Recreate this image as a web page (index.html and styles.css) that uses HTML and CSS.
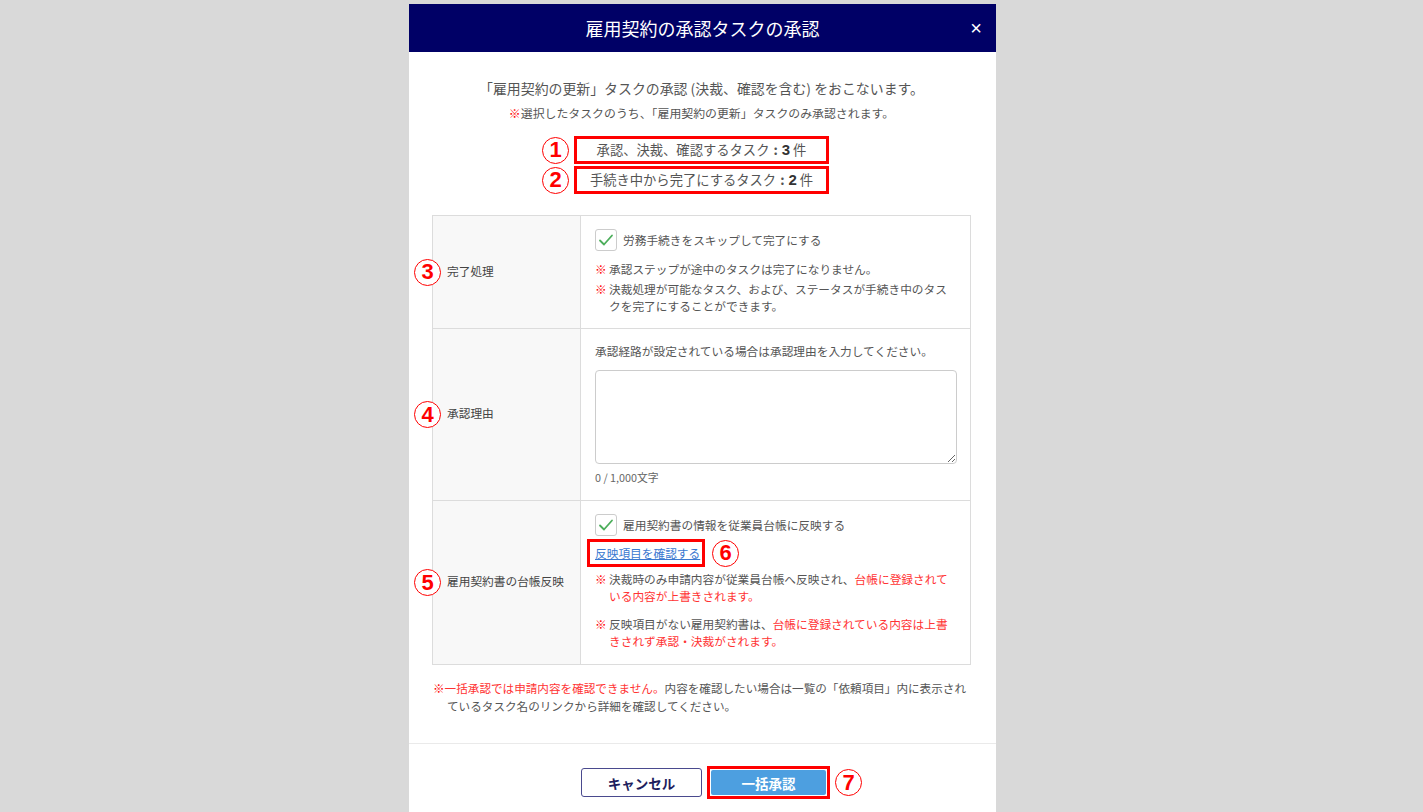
FILE: index.html
```html
<!DOCTYPE html>
<html lang="ja">
<head>
    <meta charset="UTF-8">
    <meta name="viewport" content="width=device-width, initial-scale=1.0">
    <title>雇用契約の承認タスクの承認</title>
    <link rel="stylesheet" href="styles.css">
</head>
<body>
    <div class="modal">
        <div class="modal-header">
            <span></span>
            <h1>雇用契約の承認タスクの承認</h1>
            <span class="close">×</span>
        </div>

        <div class="modal-body">
            <p class="intro">「雇用契約の更新」タスクの承認 (決裁、確認を含む) をおこないます。</p>
            <p class="sub-note"><span class="kome">※</span>選択したタスクのうち、「雇用契約の更新」タスクのみ承認されます。</p>

            <!-- Counts -->
            <div class="counts">
                <div class="count-row">
                    <span class="num">1</span>
                    <div class="count-box">承認、決裁、確認するタスク<span class="colon">:</span><b>3</b> 件</div>
                </div>
                <div class="count-row">
                    <span class="num">2</span>
                    <div class="count-box">手続き中から完了にするタスク<span class="colon">:</span><b>2</b> 件</div>
                </div>
            </div>

            <table class="form-table">
                <!-- Complete -->
                <tr>
                    <th><span class="num">3</span>完了処理</th>
                    <td>
                        <label class="check">
                            <span class="box">
                                <svg width="22" height="22" viewBox="0 0 22 22"><path d="M5 11.5 L9 15.5 L17 6.5" fill="none" stroke="#4cae5b" stroke-width="1.8" stroke-linecap="round" stroke-linejoin="round"/></svg>
                            </span>
                            労務手続きをスキップして完了にする
                        </label>
                        <ul class="notes tight">
                            <li><span class="kome">※</span><span>承認ステップが途中のタスクは完了になりません。</span></li>
                            <li><span class="kome">※</span><span>決裁処理が可能なタスク、および、ステータスが手続き中のタスクを完了にすることができます。</span></li>
                        </ul>
                    </td>
                </tr>

                <!-- Reason -->
                <tr>
                    <th><span class="num">4</span>承認理由</th>
                    <td>
                        <p class="hint">承認経路が設定されている場合は承認理由を入力してください。</p>
                        <textarea class="reason"></textarea>
                        <p class="counter">0 / 1,000文字</p>
                    </td>
                </tr>

                <!-- Ledger -->
                <tr class="last">
                    <th><span class="num">5</span>雇用契約書の台帳反映</th>
                    <td>
                        <label class="check">
                            <span class="box">
                                <svg width="22" height="22" viewBox="0 0 22 22"><path d="M5 11.5 L9 15.5 L17 6.5" fill="none" stroke="#4cae5b" stroke-width="1.8" stroke-linecap="round" stroke-linejoin="round"/></svg>
                            </span>
                            雇用契約書の情報を従業員台帳に反映する
                        </label>
                        <div class="link-row">
                            <span class="link-box"><a href="#">反映項目を確認する</a></span>
                            <span class="num">6</span>
                        </div>
                        <ul class="notes">
                            <li><span class="kome">※</span><span>決裁時のみ申請内容が従業員台帳へ反映され、<span class="red">台帳に登録されている内容が上書きされます。</span></span></li>
                            <li><span class="kome">※</span><span>反映項目がない雇用契約書は、<span class="red">台帳に登録されている内容は上書きされず承認・決裁がされます。</span></span></li>
                        </ul>
                    </td>
                </tr>
            </table>

            <p class="bottom-note"><span class="kome">※</span><span class="red">一括承認では申請内容を確認できません。</span>内容を確認したい場合は一覧の「依頼項目」内に表示されているタスク名のリンクから詳細を確認してください。</p>
        </div>

        <div class="modal-footer">
            <button class="btn btn-cancel">キャンセル</button>
            <span class="btn-mark"><button class="btn btn-primary">一括承認</button></span>
            <span class="num">7</span>
        </div>
    </div>
</body>
</html>
```

FILE: styles.css
```css
body {
    margin: 0;
    padding-right: 18px;
    height: 100vh;
    overflow: hidden;
    background-color: #d9d9d9;
    font-family: "Noto Sans CJK JP", sans-serif;
    color: #555;
}
p {
    margin: 0;
}
.modal {
    width: 587px;
    margin: 4px auto 0;
    background-color: #fff;
    min-height: 808px;
}
.modal-header {
    display: grid;
    grid-template-columns: 40px 1fr 40px;
    align-items: center;
    height: 48px;
    background-color: #000066;
    color: #fff;
}
.modal-header h1 {
    margin: 0;
    font-size: 18px;
    font-weight: normal;
    text-align: center;
}
.close {
    text-align: center;
    font-family: "Liberation Sans", sans-serif;
    font-size: 20px;
}
.modal-body {
    padding: 27px 25px 28px 23px;
}
.intro {
    font-size: 13.9px;
    line-height: 18px;
    text-align: center;
}
.sub-note {
    margin-top: 8px;
    font-size: 11.9px;
    line-height: 16px;
    text-align: center;
}
.kome {
    color: #ff0000;
}
.red {
    color: #ff3333;
}

/* annotation marks */
.num {
    display: inline-flex;
    align-items: center;
    justify-content: center;
    flex-shrink: 0;
    box-sizing: border-box;
    width: 27px;
    height: 27px;
    border: 1.5px solid #ff0000;
    border-radius: 50%;
    background-color: #fff;
    color: #ff0000;
    font-family: "Liberation Sans", sans-serif;
    font-weight: bold;
    font-size: 22px;
    line-height: 1;
}

.counts {
    margin-top: 15px;
    display: flex;
    flex-direction: column;
    gap: 2px;
}
.count-row {
    display: flex;
    justify-content: center;
    align-items: center;
}
.count-row .num {
    margin-left: -32px;
    margin-right: 5px;
}
.count-box {
    box-sizing: border-box;
    width: 255px;
    height: 28px;
    border: 3px solid #ff0000;
    font-size: 13.3px;
    line-height: 22px;
    text-align: center;
    color: #555;
}
.count-box .colon {
    margin: 0 4px;
    font-weight: bold;
}
.count-box b {
    font-family: "Liberation Sans", sans-serif;
    font-size: 15px;
    color: #333;
}

/* table */
.form-table {
    width: 100%;
    margin-top: 21px;
    border-collapse: collapse;
    font-size: 11.7px;
}
.form-table th,
.form-table td {
    border: 1px solid #dcdcdc;
}
.form-table th {
    width: 148px;
    box-sizing: border-box;
    padding: 0 0 0 14px;
    background-color: #f8f8f8;
    font-weight: normal;
    text-align: left;
    color: #444;
}
.form-table th .num {
    margin-left: -33px;
    margin-right: 6px;
    vertical-align: middle;
}
.form-table td {
    padding: 13px 13px 14px 14px;
    vertical-align: top;
}
.form-table .last td {
    padding-bottom: 15px;
}
.check {
    display: flex;
    align-items: center;
    gap: 6px;
    line-height: 22px;
}
.box {
    box-sizing: border-box;
    width: 22px;
    height: 22px;
    border: 1px solid #ccc;
    border-radius: 3px;
    background-color: #fff;
}
.box svg {
    display: block;
    margin: -1px;
}
.notes {
    list-style: none;
    margin: 0;
    padding: 0;
    line-height: 17px;
}
.notes li {
    display: flex;
    margin-top: 11px;
}
.notes.tight li:first-child {
    margin-top: 9px;
}
.notes.tight li + li {
    margin-top: 3px;
}
.notes .kome {
    width: 14px;
    flex-shrink: 0;
}
.hint {
    line-height: 17px;
}
.reason {
    display: block;
    box-sizing: border-box;
    width: 100%;
    height: 94px;
    margin-top: 11px;
    border: 1px solid #ccc;
    border-radius: 4px;
}
.counter {
    margin-top: 5px;
    font-size: 10.8px;
    line-height: 17px;
    color: #666;
}
.link-row {
    display: flex;
    align-items: center;
    margin-top: 3px;
}
.link-box {
    margin-left: -8px;
    padding: 0 2px 0 5px;
    border: 3px solid #ff0000;
    line-height: 22px;
}
.link-box a {
    color: #3a78d0;
}
.link-row .num {
    margin-left: 7px;
}
.link-row + .notes li:first-child {
    margin-top: 3px;
}

.bottom-note {
    margin: 14px -3px 0 0;
    padding-left: 15px;
    text-indent: -14px;
    font-size: 11.6px;
    line-height: 18px;
}

/* footer */
.modal-footer {
    display: flex;
    justify-content: center;
    align-items: center;
    padding: 22px 0 0 6px;
    border-top: 1px solid #eaeaea;
}
.btn {
    font-family: "Noto Sans CJK JP", sans-serif;
    font-weight: bold;
    font-size: 13.5px;
    cursor: pointer;
}
.btn-cancel {
    width: 121px;
    height: 29px;
    border: 1px solid #4a4a8e;
    border-radius: 3px;
    background-color: #fff;
    color: #1e1e5e;
}
.btn-mark {
    display: block;
    margin-left: 5px;
    padding: 1px;
    border: 3px solid #ff0000;
}
.btn-primary {
    display: block;
    width: 115px;
    height: 25px;
    border: 0;
    border-radius: 2px;
    background-color: #4d9fe0;
    color: #fff;
}
.modal-footer .num {
    margin-left: 5px;
    margin-right: -32px;
}
```
